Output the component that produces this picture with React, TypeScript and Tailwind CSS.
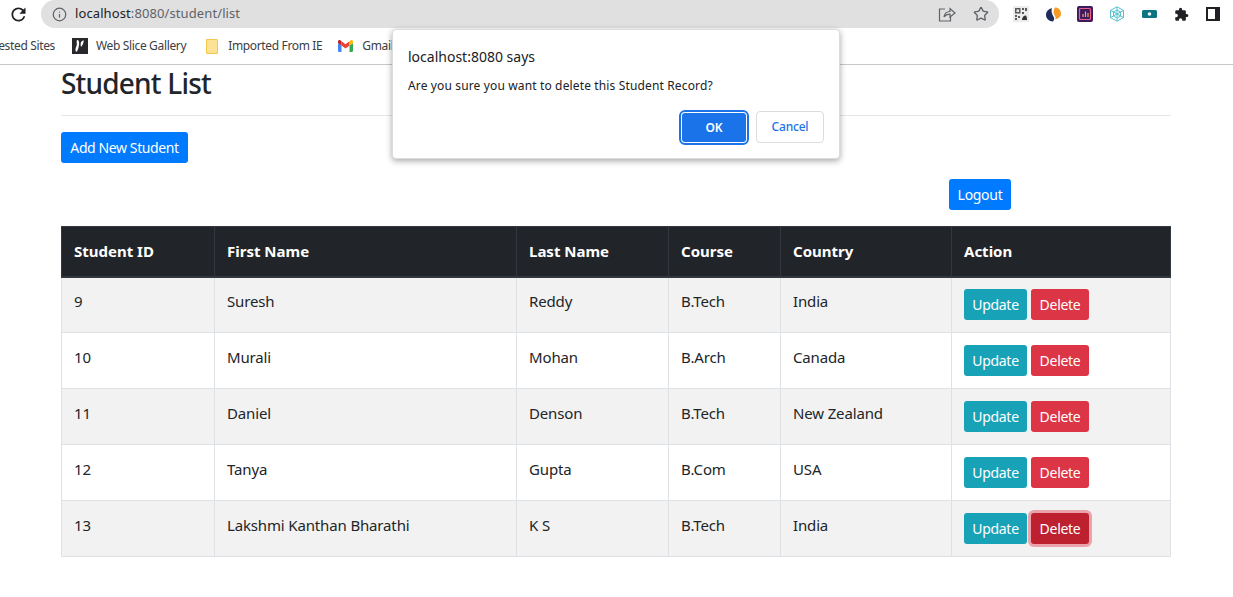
import { Info, Star } from "lucide-react";

const students = [
  { id: 9, first: "Suresh", last: "Reddy", course: "B.Tech", country: "India" },
  { id: 10, first: "Murali", last: "Mohan", course: "B.Arch", country: "Canada" },
  { id: 11, first: "Daniel", last: "Denson", course: "B.Tech", country: "New Zealand" },
  { id: 12, first: "Tanya", last: "Gupta", course: "B.Com", country: "USA" },
  { id: 13, first: "Lakshmi Kanthan Bharathi", last: "K S", course: "B.Tech", country: "India" },
];

function ReloadIcon() {
  return (
    <svg width="21" height="21" viewBox="0 0 24 24" fill="#202124">
      <path d="M17.650 6.350A7.958 7.958 0 0 0 12 4c-4.420 0-7.990 3.580-7.990 8s3.570 8 7.990 8c3.730 0 6.840-2.550 7.730-6h-2.080A5.990 5.990 0 0 1 12 18c-3.310 0-6-2.690-6-6s2.690-6 6-6c1.660 0 3.140.69 4.220 1.780L13 11h7V4l-2.350 2.350z" />
    </svg>
  );
}

function ShareIcon() {
  return (
    <svg width="18" height="16" viewBox="0 0 18 16" fill="none" stroke="#5f6368" strokeWidth="1.2">
      <path d="M7 3H1.500v12h11v-4" />
      <path d="M6 11c.5-3.500 3-5.500 6-5.500V2.500l5 4.500-5 4V8.200C9.500 8 7.500 9 6 11z" />
    </svg>
  );
}

function QrIcon() {
  return (
    <svg width="16" height="16" viewBox="0 0 16 16">
      <rect width="16" height="16" fill="#ececec" />
      <path d="M2 2h5.500v5.500H2zM9 2h2v2H9zM12 2h2v3h-2zM2 9h2v2H2zM5 10h2v2H5zM2 12h2v2H2zM9 6h2v2H9z" fill="#5a5a5a" />
      <rect x="3.500" y="3.500" width="2.500" height="2.500" fill="#ececec" />
      <path d="M9 14c0-2.500 1.500-4.500 4-4.500.5 1 1 2 1 4.500z" fill="#333" />
    </svg>
  );
}

function SplitIcon() {
  return (
    <svg width="15" height="15" viewBox="0 0 15 15">
      <path d="M6 1.200C2.500 1.800 0 4.500 0 8s3 6.500 7 6.500c1.500-1.500 1.500-3.500.5-5S4.800 4.500 6 1.200z" fill="#1f2d5c" />
      <path d="M9 .5c3.500 0 6 2.700 6 6s-2.500 5-5.500 6c.3-2-.3-3.500-1.300-5S7.500 2.500 9 .5z" fill="#f59a23" />
    </svg>
  );
}

function ChartIcon() {
  return (
    <svg width="16" height="16" viewBox="0 0 16 16">
      <rect width="16" height="16" rx="2" fill="#3b1a5e" />
      <rect x="2.500" y="2.500" width="11" height="11" rx="1" fill="none" stroke="#ec5f8c" strokeWidth="1.200" />
      <path d="M6 11V8M8.500 11V5.500M11 11V7" stroke="#f2a65a" strokeWidth="1.200" />
    </svg>
  );
}

function WebIcon() {
  return (
    <svg width="16" height="16" viewBox="0 0 16 16" fill="none" stroke="#57c1cf" strokeWidth="1">
      <path d="M8 .8l6.500 3.600v7.200L8 15.200l-6.500-3.600V4.400z" />
      <path d="M8 4l3.500 2v4L8 12l-3.500-2V6z" />
      <path d="M8 .8V15.200M1.500 4.400l13 7.200M14.500 4.400l-13 7.200" />
    </svg>
  );
}

function TicketIcon() {
  return (
    <svg width="15" height="8" viewBox="0 0 15 8">
      <rect width="15" height="8" rx="1.500" fill="#0b7480" />
      <circle cx="7.500" cy="4" r="1.800" fill="#e6f5f6" />
    </svg>
  );
}

function PuzzleIcon() {
  return (
    <svg width="15" height="15" viewBox="0 0 24 24" fill="#202124">
      <path d="M20.500 11H19V7a2 2 0 0 0-2-2h-4V3.500a2.500 2.500 0 0 0-5 0V5H4a2 2 0 0 0-2 2v3.800h1.500a2.700 2.700 0 0 1 0 5.400H2V20a2 2 0 0 0 2 2h3.800v-1.500a2.700 2.700 0 0 1 5.400 0V22H17a2 2 0 0 0 2-2v-4h1.500a2.500 2.500 0 0 0 0-5z" />
    </svg>
  );
}

function SidePanelIcon() {
  return (
    <svg width="14" height="14" viewBox="0 0 14 14">
      <rect width="14" height="14" fill="#202124" />
      <rect x="2" y="2" width="7" height="10" fill="#fff" />
    </svg>
  );
}

function SliceIcon() {
  return (
    <svg width="16" height="16" viewBox="0 0 16 16">
      <rect width="16" height="16" fill="#26282b" />
      <path d="M5 2c2 0 2.500 2 2 5s-1 6-3 7c-1-2-.5-4 .5-6S4 4 5 2zM9 4l2.500-2c.5 2-.5 5-2.500 7-.5-1.500-.5-3.500 0-5z" fill="#fff" />
    </svg>
  );
}

function FolderIcon() {
  return (
    <svg width="12" height="15" viewBox="0 0 12 15">
      <path d="M.5.500h10.500a.5.500 0 0 1 .5.500v13.500H.5z" fill="#fde293" stroke="#f2c94c" />
    </svg>
  );
}

function GmailIcon() {
  return (
    <svg width="15" height="12" viewBox="0 0 15 12" fill="none">
      <path d="M0 3v7.500c0 .8.500 1.500 1.300 1.500H3.500V5.500z" fill="#4285f4" />
      <path d="M15 3v7.500c0 .8-.500 1.500-1.300 1.500H11.500V5.500z" fill="#34a853" />
      <path d="M0 1.500C0 .3 1.400-.4 2.300.3L3.500 1.200v4.300L0 3z" fill="#c5221f" />
      <path d="M3.500 1.200l4 3 4-3v4.300l-4 3-4-3z" fill="#ea4335" />
      <path d="M15 1.500c0-1.200-1.400-1.900-2.300-1.200L11.500 1.200v4.300L15 3z" fill="#fbbc04" />
    </svg>
  );
}

function BrowserChrome() {
  const extensions = [<QrIcon />, <SplitIcon />, <ChartIcon />, <WebIcon />, <TicketIcon />, <PuzzleIcon />, <SidePanelIcon />];

  return (
    <header className="h-[65px] border-b border-[#c8c8c8] bg-white overflow-hidden text-[#3c4043]">
      <div className="h-[28px] flex items-center">
        <div className="w-[41px] flex justify-center pr-[4px]">
          <ReloadIcon />
        </div>
        <div className="h-[28px] w-[958px] rounded-full bg-[#e0e0e0] flex items-center pl-[11px] pr-[10px]">
          <Info size={15} strokeWidth={2} className="text-[#5f6368]" />
          <span className="ml-[8px] text-[13px] tracking-[0.1px] text-[#5f6368]">
            <span className="text-[#202124]">localhost</span>:8080/student/list
          </span>
          <div className="ml-auto flex items-center gap-[17px]">
            <ShareIcon />
            <Star size={16} className="text-[#5f6368]" />
          </div>
        </div>
        <div className="flex-1 flex items-center pl-[14px] gap-[16px]">
          {extensions.map((icon, index) => (
            <span key={index} className="w-4 flex justify-center">
              {icon}
            </span>
          ))}
        </div>
      </div>
      <div className="h-[36px] flex items-center text-[12px] tracking-[-0.35px] whitespace-nowrap -ml-[3px]">
        <span className="w-[58px] overflow-hidden flex justify-end">ested Sites</span>
        <span className="ml-[17px]"><SliceIcon /></span>
        <span className="ml-[8px]">Web Slice Gallery</span>
        <span className="ml-[20px]"><FolderIcon /></span>
        <span className="ml-[10px]">Imported From IE</span>
        <span className="ml-[16px]"><GmailIcon /></span>
        <span className="ml-[9px]">Gmail</span>
      </div>
    </header>
  );
}

function ConfirmDialog() {
  return (
    <div className="absolute left-[392px] top-[29px] w-[448px] h-[130px] bg-white rounded-[4px] border border-[#dcdcdc] shadow-[0_2px_6px_rgba(0,0,0,0.35)] px-[15px] pt-[17px] text-[#202124]">
      <p className="text-[14px] leading-[20px]">localhost:8080 says</p>
      <p className="mt-[10px] text-[12px] leading-[18px] tracking-[0.14px]">Are you sure you want to delete this Student Record?</p>
      <div className="mt-[16px] flex justify-end gap-[8px]">
        <button className="w-[64px] h-[29px] m-[2px] rounded-[3px] bg-[#1a73e8] text-white text-[12px] font-semibold outline outline-2 outline-offset-1 outline-[#1a73e8]">
          OK
        </button>
        <button className="w-[68px] h-[32px] rounded-[4px] bg-white border border-[#dadce0] text-[#1a73e8] text-[12px] font-medium tracking-[-0.2px]">
          Cancel
        </button>
      </div>
    </div>
  );
}

export default function App() {
  return (
    <div className="relative h-[597px] overflow-hidden bg-white font-['Noto_Sans','Open_Sans',sans-serif] text-[#212529]">
      <BrowserChrome />
      <ConfirmDialog />

      <main className="mx-[61px] w-[1110px]">
        <h1 className="mt-[1px] text-[28px] leading-[34px] font-medium tracking-[-0.8px]">Student List</h1>
        <hr className="mt-[15px] border-[#e5e5e5]" />
        <div className="mt-[16px]">
          <button className="h-[31px] w-[127px] rounded-[3px] bg-[#007bff] text-white text-[14px] tracking-[-0.4px]">Add New Student</button>
        </div>
        <div className="mt-[16px] flex pl-[888px]">
          <button className="h-[31px] w-[62px] rounded-[3px] bg-[#007bff] text-white text-[14px] tracking-[-0.3px]">Logout</button>
        </div>

        <table className="mt-[16px] w-[1109px] table-fixed border-collapse text-[15px] tracking-[-0.15px]">
          <colgroup>
            <col className="w-[153px]" />
            <col className="w-[302px]" />
            <col className="w-[152px]" />
            <col className="w-[112px]" />
            <col className="w-[171px]" />
            <col className="w-[219px]" />
          </colgroup>
          <thead>
            <tr className="h-[50px] bg-[#212529] text-white text-left tracking-normal">
              {["Student ID", "First Name", "Last Name", "Course", "Country", "Action"].map((h) => (
                <th key={h} className="px-[12px] font-bold border border-[#32383e] border-b-2">
                  {h}
                </th>
              ))}
            </tr>
          </thead>
          <tbody>
            {students.map((s, i) => (
              <tr key={s.id} className={i % 2 === 0 ? "h-[56px] bg-[#f2f2f2]" : "h-[56px] bg-white"}>
                <td className="px-[12px] pb-[7px] border border-[#dee2e6]">{s.id}</td>
                <td className="px-[12px] pb-[7px] border border-[#dee2e6]">{s.first}</td>
                <td className="px-[12px] pb-[7px] border border-[#dee2e6]">{s.last}</td>
                <td className="px-[12px] pb-[7px] border border-[#dee2e6]">{s.course}</td>
                <td className="px-[12px] pb-[7px] border border-[#dee2e6]">{s.country}</td>
                <td className="px-[12px] border border-[#dee2e6]">
                  <div className="flex gap-[4px] text-[14px] tracking-[-0.3px]">
                    <button className="h-[31px] w-[63px] rounded-[3px] bg-[#17a2b8] text-white">Update</button>
                    {s.id === 13 ? (
                      <button className="h-[31px] w-[58px] rounded-[3px] bg-[#bd2130] text-white shadow-[0_0_0_3px_rgba(225,83,97,0.5)]">Delete</button>
                    ) : (
                      <button className="h-[31px] w-[58px] rounded-[3px] bg-[#dc3545] text-white">Delete</button>
                    )}
                  </div>
                </td>
              </tr>
            ))}
          </tbody>
        </table>
      </main>
    </div>
  );
}
